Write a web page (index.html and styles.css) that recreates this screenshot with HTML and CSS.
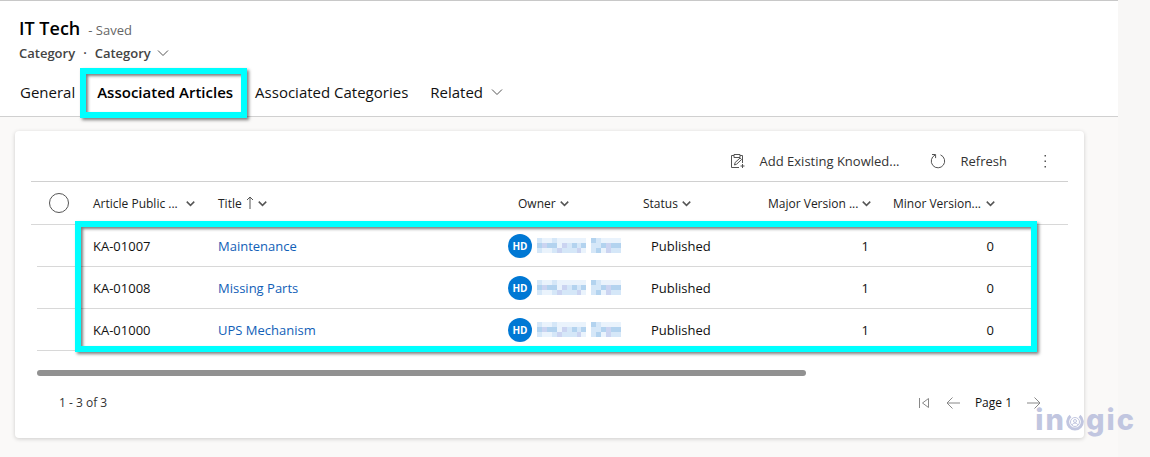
FILE: index.html
```
<!DOCTYPE html>
<html lang="en">
<head>
    <meta charset="UTF-8">
    <meta name="viewport" content="width=device-width, initial-scale=1.0">
    <title>IT Tech - Category</title>
    <link rel="stylesheet" href="styles.css">
</head>
<body>
    <!-- Shared icons -->
    <svg class="icon-defs" aria-hidden="true">
        <symbol id="chevron" viewBox="0 0 12 12"><path d="M1 3.5l5 5 5-5"/></symbol>
        <symbol id="masked-name" viewBox="0 0 17 3" preserveAspectRatio="none">
            <path fill="#eaf3fc" d="M0 0h10v3h-10zM11 0h6v3h-6z"/>
            <path fill="#d5e7f8" d="M0 0h1v3h-1zM3 0h1v3h-1zM5 1h4v2h-4zM11 0h2v3h-2zM14 1h3v2h-3z"/>
            <path fill="#b3d3ef" d="M0 1h1v1h-1zM2 1h2v1h-2zM7 1h1v1h-1zM9 1h1v1h-1zM11 0h1v1h-1zM13 1h1v1h-1zM12 2h1v1h-1zM15 1h2v1h-2z"/>
            <path fill="#cbd4f1" d="M1 1h1v1h-1zM5 1h1v1h-1zM4 2h1v1h-1zM8 2h1v1h-1zM14 1h1v2h-1z"/>
        </symbol>
    </svg>

    <main class="page">
        <header class="record-header">
            <div class="record-title">
                <h1>IT Tech</h1>
                <span class="save-state">- Saved</span>
            </div>
            <div class="record-meta">
                <span>Category</span>
                <span>·</span>
                <button type="button" class="form-switch">Category <svg class="chevron"><use href="#chevron"/></svg></button>
            </div>
            <nav class="tabs">
                <button type="button" class="tab">General</button>
                <button type="button" class="tab active">Associated Articles</button>
                <button type="button" class="tab">Associated Categories</button>
                <button type="button" class="tab">Related <svg class="chevron"><use href="#chevron"/></svg></button>
            </nav>
        </header>

        <section class="card">
            <div class="toolbar">
                <button type="button" class="command">
                    <svg viewBox="0 0 16 16"><path d="M5 2.500H2.500v12H10M11 2.500h2.500V10M5 1.500h6v3H5zM5.500 12l.6-2.500 5-4.500 1.500 1.500-5 4.700zM13.500 11v4M11.500 13h4"/></svg>
                    Add Existing Knowled...
                </button>
                <button type="button" class="command">
                    <svg viewBox="0 0 16 16"><path d="M10.500 1.900A6.700 6.700 0 1 1 5 2.100M2 1.500h3.600v3.600"/></svg>
                    Refresh
                </button>
                <button type="button" class="command more" aria-label="More commands">
                    <svg viewBox="0 0 16 16"><path d="M7.500 2h1.500v1.500H7.500zM7.500 7.500h1.500V9H7.500zM7.500 13h1.500v1.500H7.500z"/></svg>
                </button>
            </div>

            <div class="grid-wrap">
                <table class="grid">
                    <colgroup>
                        <col class="col-check">
                        <col class="col-data">
                        <col class="col-title">
                        <col class="col-data">
                        <col class="col-data">
                        <col class="col-data">
                        <col class="col-data">
                        <col>
                    </colgroup>
                    <thead>
                        <tr>
                            <th><input type="checkbox" class="select-all" aria-label="Select all rows"></th>
                            <th><button type="button" class="spread">Article Public ... <svg class="chevron"><use href="#chevron"/></svg></button></th>
                            <th><button type="button">Title <svg class="sort" viewBox="0 0 8 14"><path d="M4 13V1M1 4l3-3 3 3"/></svg><svg class="chevron"><use href="#chevron"/></svg></button></th>
                            <th><button type="button">Owner <svg class="chevron"><use href="#chevron"/></svg></button></th>
                            <th><button type="button">Status <svg class="chevron"><use href="#chevron"/></svg></button></th>
                            <th><button type="button" class="spread">Major Version ... <svg class="chevron"><use href="#chevron"/></svg></button></th>
                            <th><button type="button" class="spread">Minor Version... <svg class="chevron"><use href="#chevron"/></svg></button></th>
                            <th></th>
                        </tr>
                    </thead>
                    <tbody>
                        <tr>
                            <td></td>
                            <td>KA-01007</td>
                            <td><a href="#">Maintenance</a></td>
                            <td class="owner"><div><span class="avatar">HD</span><svg class="masked"><use href="#masked-name"/></svg></div></td>
                            <td class="status">Published</td>
                            <td class="number">1</td>
                            <td class="number">0</td>
                            <td></td>
                        </tr>
                        <tr>
                            <td></td>
                            <td>KA-01008</td>
                            <td><a href="#">Missing Parts</a></td>
                            <td class="owner"><div><span class="avatar">HD</span><svg class="masked"><use href="#masked-name"/></svg></div></td>
                            <td class="status">Published</td>
                            <td class="number">1</td>
                            <td class="number">0</td>
                            <td></td>
                        </tr>
                        <tr>
                            <td></td>
                            <td>KA-01000</td>
                            <td><a href="#">UPS Mechanism</a></td>
                            <td class="owner"><div><span class="avatar">HD</span><svg class="masked"><use href="#masked-name"/></svg></div></td>
                            <td class="status">Published</td>
                            <td class="number">1</td>
                            <td class="number">0</td>
                            <td></td>
                        </tr>
                    </tbody>
                </table>
                <div class="rows-highlight"></div>
            </div>

            <div class="scroll-track"><div class="scroll-thumb"></div></div>

            <footer class="pager">
                <span class="range">1 - 3 of 3</span>
                <button type="button" aria-label="First page"><svg viewBox="0 0 14 14"><path d="M2.500 2v10M11.500 2.500v9L5.500 7z"/></svg></button>
                <button type="button" aria-label="Previous page"><svg viewBox="0 0 14 14"><path d="M14 7H1M6.500 1.500L1 7l5.500 5.500"/></svg></button>
                <span class="page-number">Page 1</span>
                <button type="button" aria-label="Next page"><svg viewBox="0 0 14 14"><path d="M0 7h13M7.500 1.500L13 7l-5.500 5.500"/></svg></button>
            </footer>
        </section>
    </main>

    <div class="watermark">
        <span>i</span><span>n</span>
        <svg viewBox="0 0 18 18">
            <path class="ring" d="M4.500 3A7.300 7.300 0 1 0 13.500 3"/>
            <circle cx="9" cy="9" r="4.500"/>
            <circle cx="9" cy="8" r="1.500"/>
            <path d="M6 12c1-2.500 5-2.500 6 0"/>
        </svg>
        <span>g</span><span>i</span><span>c</span>
    </div>
</body>
</html>
```
FILE: styles.css
```
* {
    box-sizing: border-box;
}

body {
    margin: 0;
    padding-right: 32px;
    min-height: 100vh;
    position: relative;
    display: flex;
    background: #f8f7f6;
    color: #111;
    font-family: "Open Sans", "Noto Sans", sans-serif;
    font-size: 13px;
}

button {
    padding: 0;
    border: none;
    background: none;
    color: inherit;
    font: inherit;
    cursor: pointer;
}

svg {
    fill: none;
    stroke: #555;
    flex: none;
}

.icon-defs {
    position: absolute;
    width: 0;
    height: 0;
}

.chevron {
    width: 12px;
    height: 12px;
}

.page {
    flex: 1;
    min-width: 0;
    background: #faf9f8;
}

/* Record header */
.record-header {
    padding: 15px 19px 0;
    background: #fff;
    border-top: 1px solid #c8c8c8;
    border-bottom: 1px solid #d0d0d0;
}

.record-title {
    display: flex;
    align-items: baseline;
    gap: 8px;
    line-height: 24px;
}

h1 {
    margin: 0;
    font-size: 18px;
    font-weight: 600;
    color: #000;
}

.save-state {
    color: #666;
}

.record-meta {
    display: flex;
    gap: 8px;
    line-height: 22px;
    font-weight: 600;
    color: #444;
}

.form-switch,
.tab {
    display: flex;
    align-items: center;
    gap: 6px;
}

.tabs {
    display: flex;
    gap: 22px;
    padding: 4px 1px 0;
}

.tab {
    position: relative;
    height: 48px;
    font-size: 15px;
    white-space: nowrap;
}

.tab .chevron {
    margin-left: 2px;
}

.tab.active {
    font-weight: 600;
    color: #000;
}

.tab.active::after,
.rows-highlight {
    content: "";
    position: absolute;
    border: 6px solid #00ffff;
    box-shadow: 2px 2px 3px rgba(0, 0, 0, 0.5), inset 2px 2px 3px rgba(0, 0, 0, 0.5);
    pointer-events: none;
}

.tab.active::after {
    inset: 0 -14px -2px -17px;
}

/* Card with the related records */
.card {
    margin: 14px 34px 19px 15px;
    padding: 10px 16px 25px;
    background: #fff;
    border-radius: 4px;
    box-shadow: 0 1px 4px rgba(0, 0, 0, 0.18);
}

.toolbar {
    display: flex;
    justify-content: flex-end;
    gap: 30px;
    height: 40px;
    padding-right: 15px;
}

.command {
    display: flex;
    align-items: center;
    gap: 15px;
    color: #333;
}

.command svg {
    width: 16px;
    height: 16px;
}

.command.more svg {
    fill: #555;
    stroke: none;
}

.grid-wrap {
    position: relative;
}

.grid {
    width: 100%;
    table-layout: fixed;
    border-collapse: separate;
    border-spacing: 0;
    border-top: 1px solid #d0d0d0;
}

.col-check {
    width: 54px;
}

.col-data {
    width: 125px;
}

.col-title {
    width: 300px;
}

.grid th,
.grid td {
    height: 42px;
    padding: 0 8px;
    text-align: left;
    white-space: nowrap;
    border-bottom: 1px solid #d8d8d8;
}

.grid th {
    height: 43px;
    font-size: 12px;
    font-weight: 500;
    color: #222;
}

.grid th button {
    display: flex;
    align-items: center;
    gap: 4px;
}

.grid th .spread {
    width: 102px;
    justify-content: space-between;
}

.grid th .chevron {
    width: 9px;
    height: 9px;
    stroke-width: 2px;
}

.sort {
    width: 8px;
    height: 14px;
}

.select-all {
    appearance: none;
    display: block;
    width: 20px;
    height: 20px;
    margin: 0 0 0 10px;
    border: 1px solid #555;
    border-radius: 50%;
}

/* Row lines are inset at both ends */
.grid td:first-child,
.grid td:last-child {
    border-bottom: none;
    background: linear-gradient(#d8d8d8, #d8d8d8) no-repeat 6px 100% / 100% 1px;
}

.grid td:last-child {
    background-position: 0 100%;
    background-size: 22px 1px;
}

.grid a {
    color: #1160b7;
    text-decoration: none;
}

.grid .owner {
    padding: 0;
}

.owner div {
    display: flex;
    align-items: center;
    gap: 5px;
    margin-left: -2px;
}

.avatar {
    width: 24px;
    height: 24px;
    border-radius: 50%;
    background: #0078d4;
    color: #fff;
    font-size: 10px;
    font-weight: 700;
    line-height: 24px;
    text-align: center;
}

.masked {
    width: 84px;
    height: 15px;
    stroke: none;
    shape-rendering: crispEdges;
}

.grid .status,
.grid .number {
    padding: 0 16px;
}

.grid .number {
    text-align: right;
}

.rows-highlight {
    inset: 40px 31px -1px 44px;
}

.scroll-track {
    margin: 19px 6px 0;
}

.scroll-thumb {
    width: 75%;
    height: 6px;
    border-radius: 3px;
    background: #919191;
}

.pager {
    display: flex;
    align-items: center;
    gap: 15px;
    padding: 17px 27px 0 28px;
    font-size: 12px;
    line-height: 20px;
}

.range {
    margin-right: auto;
    color: #333;
}

.pager button {
    display: flex;
}

.pager svg {
    width: 14px;
    height: 14px;
    stroke: #888;
}

/* Brand mark laid over the corner */
.watermark {
    position: absolute;
    right: 16px;
    bottom: 20px;
    display: flex;
    align-items: center;
    gap: 2px;
    color: #c1c6e0;
    font-family: Inter, sans-serif;
    font-size: 29px;
    font-weight: 800;
    line-height: 34px;
    pointer-events: none;
}

.watermark svg {
    width: 18px;
    height: 18px;
    margin-top: 4px;
    stroke: #c1c6e0;
}

.watermark .ring {
    stroke-width: 3px;
}
```
